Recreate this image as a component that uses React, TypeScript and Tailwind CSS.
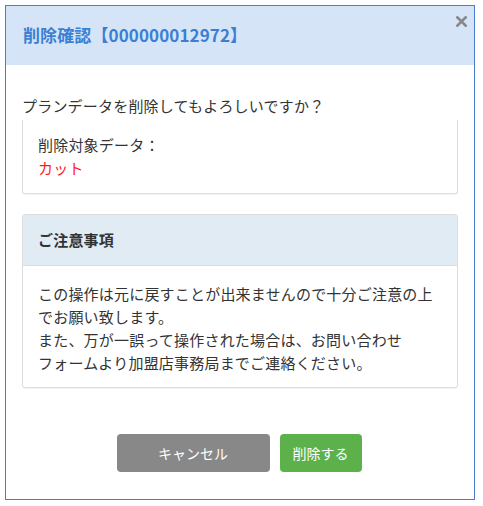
import { X } from "lucide-react";

export default function App() {
    return (
        <div className="min-h-screen bg-white pl-[5px] pt-[5px] font-['Noto_Sans_CJK_JP','Noto_Sans',sans-serif] text-[15px] text-[#333]">
            <div className="relative w-[470px] h-[495px] border border-[#4a7bd0] bg-white">
                <div className="h-[59px] bg-[#d5e4f7] flex items-center pl-[17px]">
                    <h1 className="text-[17px] font-bold text-[#3b7fd4] tracking-[0.1px] -mt-[2px]">削除確認【000000012972】</h1>
                </div>
                <button className="absolute right-[4px] top-[7px] text-[#888]">
                    <X className="size-[17px]" strokeWidth={3.5} />
                </button>

                <div className="px-[16px] pt-[30px] tracking-[0.2px]">
                    <p className="leading-[22px]">プランデータを削除してもよろしいですか？</p>

                    <div className="mt-[3px] border-x border-b border-[#ddd] rounded-b-[3px] shadow-[0_1px_1px_rgba(0,0,0,0.05)] px-[15px] pt-[13px] pb-[14px] leading-[23px]">
                        <p>削除対象データ：</p>
                        <p className="text-[#ff1a1a]">カット</p>
                    </div>

                    <div className="mt-[20px] border border-[#ddd] rounded-[3px] shadow-[0_1px_1px_rgba(0,0,0,0.05)] overflow-hidden">
                        <div className="h-[51px] bg-[#e1ebf4] border-b border-[#ddd] flex items-center px-[15px]">
                            <h2 className="font-bold">ご注意事項</h2>
                        </div>
                        <div className="px-[15px] pt-[16px] pb-[13px] leading-[23px]">
                            <p>この操作は元に戻すことが出来ませんので十分ご注意の上<br />でお願い致します。</p>
                            <p>また、万が一誤って操作された場合は、お問い合わせ<br />フォームより加盟店事務局までご連絡ください。</p>
                        </div>
                    </div>
                </div>

                <div className="flex justify-center gap-[10px] mt-[46px] pr-[2px]">
                    <button className="w-[153px] h-[38px] rounded-[4px] bg-[#888888] text-white text-[14px]">キャンセル</button>
                    <button className="w-[82px] h-[38px] rounded-[4px] bg-[#5cb14b] text-white text-[14px]">削除する</button>
                </div>
            </div>
        </div>
    );
}
